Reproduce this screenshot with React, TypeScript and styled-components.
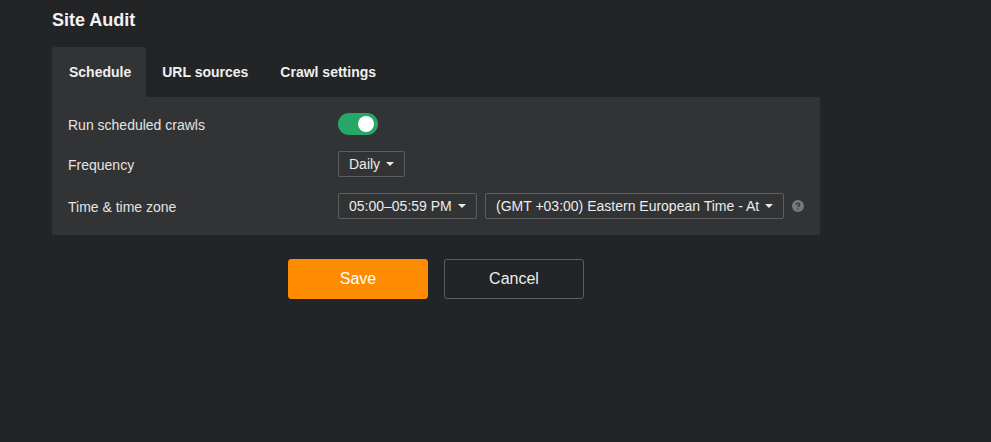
import React from 'react'
import styled, { createGlobalStyle } from 'styled-components'

const GlobalStyle = createGlobalStyle`
  html, body {
    margin: 0;
    height: 100%;
    background-color: #232425;
    font-family: "Liberation Sans", Arial, sans-serif;
    overflow: hidden;
  }
`

const Page = styled.div`
  width: 768px;
  padding: 10px 0 0 52px;
`

const Title = styled.h1`
  margin: 0 0 16px;
  height: 21px;
  line-height: 21px;
  font-size: 18px;
  font-weight: 700;
  color: #f2f2f2;
`

const Tabs = styled.div`
  display: flex;
  height: 50px;
`

const Tab = styled.div<{ $active?: boolean }>`
  display: flex;
  align-items: center;
  padding: 0 16px;
  font-size: 14px;
  font-weight: 700;
  color: #f0f0f0;
  border-radius: 3px 3px 0 0;
  background-color: ${(props) => (props.$active ? '#323335' : 'transparent')};

  &:first-child {
    padding: 0 15px 0 17px;
  }
`

const Panel = styled.div`
  display: flex;
  flex-direction: column;
  gap: 16px;
  padding: 16px;
  background-color: #323335;
`

const Row = styled.div`
  display: flex;
  align-items: center;
`

const Label = styled.div`
  width: 270px;
  padding-top: 2px;
  font-size: 14px;
  color: #e4e4e4;
`

const Controls = styled.div`
  display: flex;
  align-items: center;
  gap: 8px;
`

const Toggle = styled.div`
  display: flex;
  align-items: center;
  justify-content: flex-end;
  width: 40px;
  height: 22px;
  padding: 0 4px;
  box-sizing: border-box;
  border-radius: 11px;
  background-color: #26a767;
`

const Knob = styled.div`
  width: 16px;
  height: 16px;
  border-radius: 50%;
  background-color: #fff;
`

const Select = styled.div<{ $width: number }>`
  display: flex;
  align-items: center;
  justify-content: space-between;
  box-sizing: border-box;
  width: ${(props) => props.$width}px;
  height: 26px;
  padding: 0 11px 0 10px;
  border: 1px solid #5c5e60;
  border-radius: 2px;
  font-size: 14px;
  color: #ececec;
  white-space: nowrap;
`

const Caret = styled.span`
  width: 0;
  height: 0;
  margin-left: 6px;
  border-left: 4px solid transparent;
  border-right: 4px solid transparent;
  border-top: 4px solid #e8e8e8;
`

const Help = styled.svg`
  display: block;
  width: 12px;
  height: 12px;
`

const Actions = styled.div`
  display: flex;
  gap: 16px;
  margin: 24px 0 0 236px;
`

const Button = styled.button<{ $primary?: boolean }>`
  width: 140px;
  height: 40px;
  padding: 0;
  box-sizing: border-box;
  border: 1px solid ${(props) => (props.$primary ? '#ff8c00' : '#5c5e60')};
  border-radius: 3px;
  font-family: inherit;
  font-size: 16px;
  color: ${(props) => (props.$primary ? '#fff' : '#ececec')};
  background-color: ${(props) => (props.$primary ? '#ff8c00' : 'transparent')};
`

const App: React.FC = () => {
  return (
    <Page>
      <GlobalStyle />
      <Title>Site Audit</Title>
      <Tabs>
        <Tab $active>Schedule</Tab>
        <Tab>URL sources</Tab>
        <Tab>Crawl settings</Tab>
      </Tabs>
      <Panel>
        <Row>
          <Label>Run scheduled crawls</Label>
          <Toggle>
            <Knob />
          </Toggle>
        </Row>
        <Row>
          <Label>Frequency</Label>
          <Select $width={67}>
            Daily
            <Caret />
          </Select>
        </Row>
        <Row>
          <Label>Time &amp; time zone</Label>
          <Controls>
            <Select $width={139}>
              05:00–05:59 PM
              <Caret />
            </Select>
            <Select $width={299}>
              (GMT +03:00) Eastern European Time - At
              <Caret />
            </Select>
            <Help viewBox="0 0 12 12">
              <circle cx="6" cy="6" r="6" fill="#77797b" />
              <path
                d="M4.2 4.7C4.2 3.7 5 3.1 6 3.1s1.8.6 1.8 1.5c0 1.3-1.8 1.3-1.8 2.6"
                fill="none"
                stroke="#323335"
                strokeWidth="1.3"
              />
              <circle cx="6" cy="9" r=".8" fill="#323335" />
            </Help>
          </Controls>
        </Row>
      </Panel>
      <Actions>
        <Button $primary>Save</Button>
        <Button>Cancel</Button>
      </Actions>
    </Page>
  )
}

export default App
